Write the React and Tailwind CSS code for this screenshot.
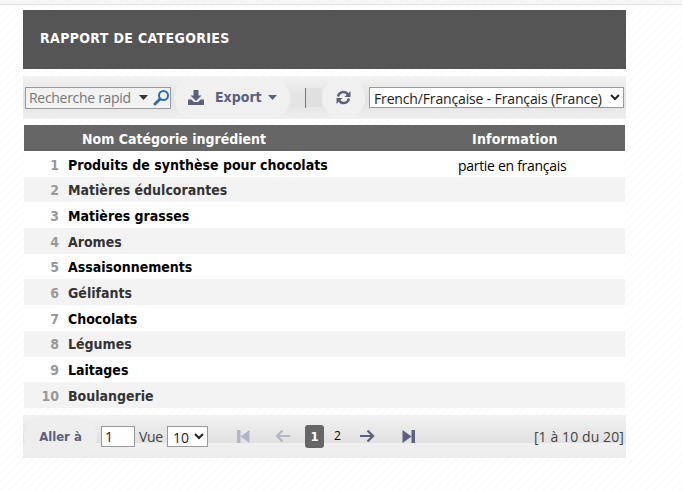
const rows = ["Produits de synthèse pour chocolats","Matières édulcorantes","Matières grasses","Aromes","Assaisonnements","Gélifants","Chocolats","Légumes","Laitages","Boulangerie"];

const Step = ({ flip, color }) => (
  <svg width="13" height="15" viewBox="0 0 13 15" className={flip ? "-scale-x-100" : ""}>
    <rect x="0" y="1" width="3.5" height="13" fill={color} />
    <path d="M12.5 1v13L3.5 7.5z" fill={color} />
  </svg>
);
const Arrow = ({ flip, color }) => (
  <svg width="15" height="14" viewBox="0 0 15 14" className={flip ? "-scale-x-100" : ""}>
    <path d="M7.5 1.5 2 7l5.5 5.5M2 7h13" fill="none" stroke={color} strokeWidth="2.2" />
  </svg>
);

export default function App() {
  return (
    <div className="h-[490px] w-[682px] overflow-hidden bg-[repeating-linear-gradient(135deg,#ffffff_0px,#ffffff_4px,#fcfcfc_4px,#fcfcfc_6px)] font-['DejaVu_Sans_Condensed','DejaVu_Sans',sans-serif] text-[14px] text-[#222]">
      <div className="h-[5px] border-b border-[#e6e6e6] bg-[#f5f5f5]" />
      <div className="ml-[23px] mt-[5px] w-[603px]">
        <div className="flex h-[59px] items-center bg-[#555555] pb-[2px] pl-[17px] text-[14px] font-bold tracking-[0.35px] text-white">RAPPORT DE CATEGORIES</div>

        <div className="mt-[7px] flex h-[43px] items-center bg-[linear-gradient(#f3f3f3,#e4e4e4_45%,#e4e4e4_65%,#f0f0f0)]">
          <div className="ml-[2px] flex h-[22px] w-[146px] items-center overflow-hidden whitespace-nowrap border border-[#999] bg-[#f2f2f2] pl-[3px] font-['Open_Sans',sans-serif] text-[14px] text-[#777]">
            <span className="w-[100px] shrink-0 tracking-[-0.3px]">Recherche rapid</span>
            <svg width="9" height="5" viewBox="0 0 9 5" className="ml-[10px] shrink-0"><path d="M0 0h9L4.5 5z" fill="#333" /></svg>
            <svg width="17" height="17" viewBox="0 0 17 17" className="ml-[5px] shrink-0">
              <circle cx="10.5" cy="6.5" r="4.5" fill="none" stroke="#2f6fb0" strokeWidth="2" />
              <path d="M7 10 2 15" stroke="#2f6fb0" strokeWidth="3" strokeLinecap="round" />
            </svg>
          </div>
          <div className="ml-[3px] flex h-[40px] w-[116px] items-center rounded-[20px] bg-[#f0f0f0] pl-[14px] text-[14px] font-bold text-[#5a6080]">
            <svg width="16" height="15" viewBox="0 0 16 15">
              <path d="M5.5 0h5v5.5h3L8 11 2.5 5.5h3z" fill="#5a6080" />
              <path d="M0 9.5h3.5L6 12h4l2.5-2.5H16V15H0z" fill="#5a6080" />
            </svg>
            <span className="ml-[11px]">Export</span>
            <svg width="9" height="5" viewBox="0 0 9 5" className="ml-[6px]"><path d="M0 0h9L4.5 5z" fill="#5a6080" /></svg>
          </div>
          <div className="ml-[15px] h-[20px] w-px bg-[#777]" />
          <div className="h-[19px] w-[16px] bg-[#e0e0e0]" />
          <div className="flex h-[40px] w-[43px] items-center justify-center rounded-[20px] bg-[#f0f0f0]">
            <svg width="15" height="15" viewBox="0 0 15 15" fill="none" stroke="#5a6080" strokeWidth="2.4">
              <path d="M2 6.5A5.5 5.5 0 0 1 12 4.5" />
              <path d="M13 8.5A5.5 5.5 0 0 1 3 10.5" />
              <path d="M14.5 1v6h-6z" fill="#5a6080" stroke="none" />
              <path d="M.5 14V8h6z" fill="#5a6080" stroke="none" />
            </svg>
          </div>
          <select defaultValue="fr" className="ml-[4px] h-[21px] w-[255px] border border-[#999] bg-white font-['Open_Sans',sans-serif] text-[14px] tracking-[-0.15px] text-[#222]" style={{ appearance: "auto" }}>
            <option value="fr">French/Française - Français (France)</option>
          </select>
        </div>

        <div className="ml-px mt-[6px] w-[601px]">
          <div className="flex h-[26px] items-center bg-[#666666] pt-[2px] text-[14px] font-bold text-white">
            <div className="w-[367px] pl-[58px]">Nom Catégorie ingrédient</div>
            <div className="w-[234px] pl-[81px] tracking-[0.2px]">Information</div>
          </div>
          {rows.map((r, i) => (
            <div key={r} className={`flex h-[25.7px] items-center pt-[2.6px] ${i % 2 ? "bg-[#f3f3f3] text-[#333]" : "bg-white text-black"}`}>
              <div className="w-[35px] text-right text-[14px] font-bold text-[#999]">{i + 1}</div>
              <div className="ml-[9px] w-[390px] text-[14px] font-bold">{r}</div>
              <div className="font-['Open_Sans',sans-serif] text-[14px] tracking-[-0.3px]">{i === 0 ? "partie en français" : ""}</div>
            </div>
          ))}
        </div>

        <div className="mt-[7px] flex h-[43px] items-center bg-[linear-gradient(#f2f2f2,#e2e2e2_60%,#e2e2e2_65%,#f0f0f0_66%,#ececec)] font-['Open_Sans',sans-serif] text-[14px]">
          <div className="ml-px flex h-[40px] w-[73px] items-center justify-center rounded-[20px] bg-[#eeeeee] font-['DejaVu_Sans_Condensed','DejaVu_Sans',sans-serif] text-[13px] font-bold text-[#5a6080]">Aller à</div>
          <div className="ml-[4px] flex h-[21px] w-[34px] items-center border border-[#999] bg-white pl-[3px] text-[#222]">1</div>
          <span className="ml-[4px] w-[24px] tracking-[-0.3px] text-[#444]">Vue</span>
          <select defaultValue="10" className="ml-[4px] h-[21px] w-[41px] border border-[#999] bg-white pl-[1px] text-[#222]" style={{ appearance: "auto" }}>
            <option value="10">10</option>
          </select>
          <div className="ml-[29px] flex"><Step color="#b3b6c6" /></div>
          <div className="ml-[25px] flex"><Arrow color="#b3b6c6" /></div>
          <div className="ml-[15px] flex h-[23px] w-[19px] items-center justify-center rounded-[3px] bg-[#666] font-['DejaVu_Sans_Condensed','DejaVu_Sans',sans-serif] text-[13px] font-bold text-white">1</div>
          <div className="ml-[10px] w-[7px] text-[12px] text-black">2</div>
          <div className="ml-[19px] flex"><Arrow flip color="#5a6080" /></div>
          <div className="ml-[27px] flex"><Step flip color="#5a6080" /></div>
          <div className="ml-auto mr-[2px] tracking-[0.1px] text-[#444]">[1 à 10 du 20]</div>
        </div>
      </div>
    </div>
  );
}
